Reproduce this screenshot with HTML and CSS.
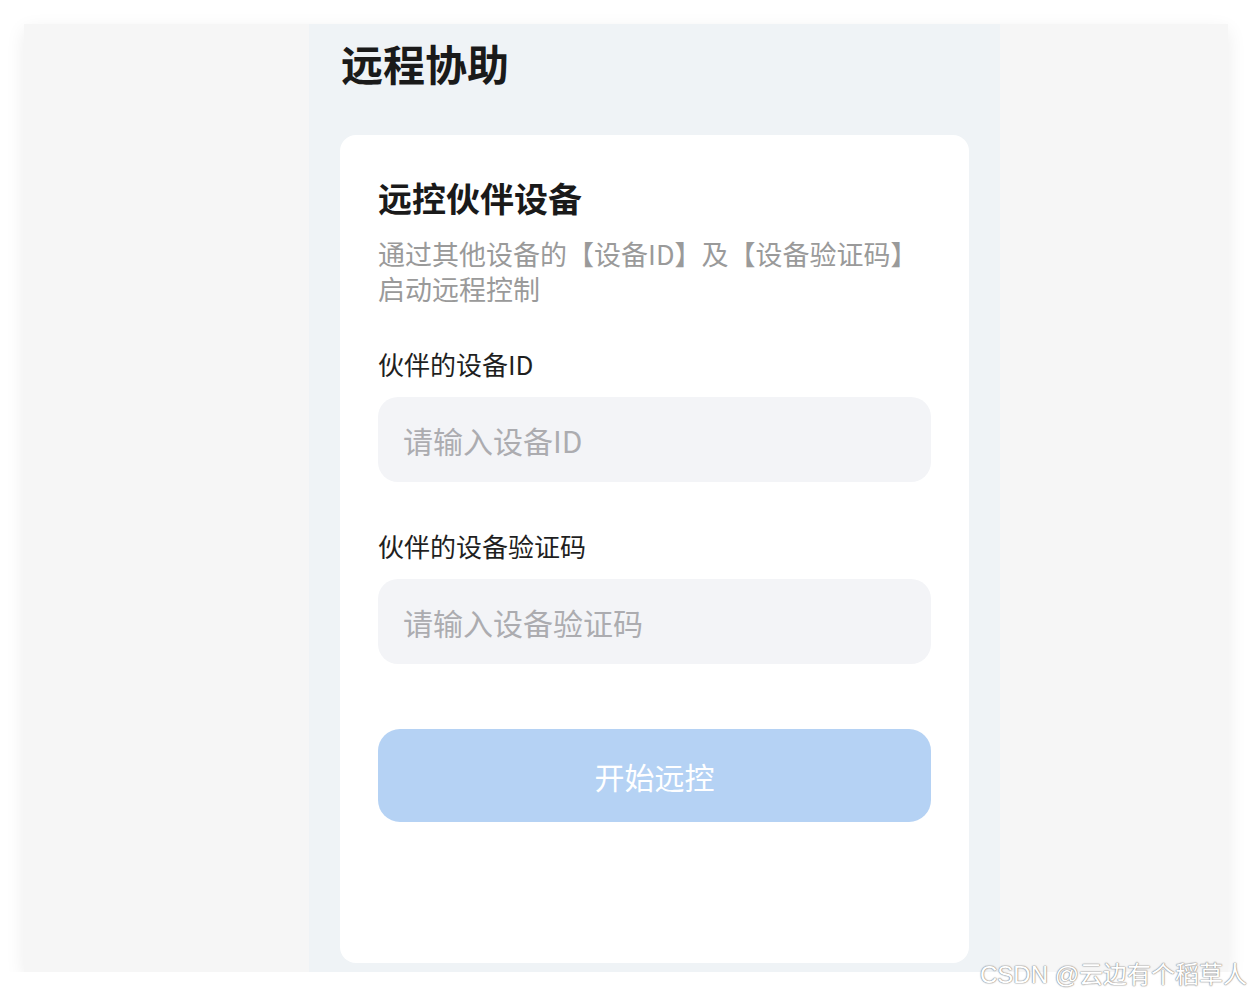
FILE: index.html
```html
<!DOCTYPE html>
<html lang="zh-CN">
<head>
    <meta charset="UTF-8">
    <meta name="viewport" content="width=device-width, initial-scale=1.0">
    <title>远程协助</title>
    <link rel="stylesheet" href="styles.css">
</head>
<body>

    <div class="frame">
        <div class="column">
            <h1 class="page-title">远程协助</h1>

            <form class="card" id="remoteForm">
                <h2 class="card-title">远控伙伴设备</h2>
                <p class="card-desc">通过其他设备的【设备ID】及【设备验证码】启动远程控制</p>

                <label class="field-label" for="deviceId">伙伴的设备ID</label>
                <input class="field-input" type="text" id="deviceId" placeholder="请输入设备ID">

                <label class="field-label second" for="deviceCode">伙伴的设备验证码</label>
                <input class="field-input" type="text" id="deviceCode" placeholder="请输入设备验证码">

                <button class="start-btn" type="submit">开始远控</button>
            </form>
        </div>
    </div>

    <div class="watermark">CSDN @云边有个稻草人</div>

</body>
</html>
```

FILE: styles.css
```css
body {
    margin: 0;
    background-color: #ffffff;
    font-family: "Noto Sans CJK SC", "Noto Sans", sans-serif;
    color: #1a1a1a;
}

.frame {
    margin: 24px 0 0 24px;
    width: 1204px;
    height: 948px;
    background-color: #f6f6f6;
    box-shadow: 0 6px 18px rgba(0, 0, 0, 0.08);
}

.column {
    margin-left: 285px;
    width: 691px;
    height: 100%;
    background-color: #eff3f6;
    padding-top: 9px;
    box-sizing: border-box;
}

.page-title {
    margin: 0 0 0 32px;
    font-size: 42px;
    line-height: 60px;
    font-weight: 700;
    color: #1a1a1a;
}

.card {
    display: flex;
    flex-direction: column;
    margin: 42px 0 0 31px;
    width: 629px;
    height: 828px;
    box-sizing: border-box;
    padding: 43px 38px 0 38px;
    background-color: #ffffff;
    border-radius: 16px;
}

.card-title {
    margin: 0;
    font-size: 34px;
    line-height: 40px;
    font-weight: 700;
    color: #1a1a1a;
}

.card-desc {
    margin: 18px 0 0 0;
    font-size: 27px;
    line-height: 35px;
    color: #9a9a9a;
}

.field-label {
    margin-top: 40px;
    font-size: 26px;
    line-height: 35px;
    color: #1f1f1f;
}

.field-label.second {
    margin-top: 46px;
}

.field-input {
    margin-top: 16px;
    height: 85px;
    box-sizing: border-box;
    padding: 0 25px;
    border: none;
    border-radius: 20px;
    background-color: #f3f4f7;
    font-family: "Noto Sans CJK SC", "Noto Sans", sans-serif;
    font-size: 30px;
    color: #333;
    outline: none;
}

.field-input::placeholder {
    color: #acacb0;
}

.start-btn {
    margin-top: 65px;
    height: 93px;
    border: none;
    border-radius: 22px;
    background-color: #b5d2f4;
    color: #ffffff;
    font-family: "Noto Sans CJK SC", "Noto Sans", sans-serif;
    font-size: 30px;
    cursor: pointer;
}

.watermark {
    position: absolute;
    right: 5px;
    top: 958px;
    font-family: "Liberation Sans", "Noto Sans CJK SC", sans-serif;
    font-size: 24px;
    line-height: 34px;
    color: #ffffff;
    text-shadow: 0 0 1px #888, 0 0 1px #888, 0 0 2px #aaa;
}
```
